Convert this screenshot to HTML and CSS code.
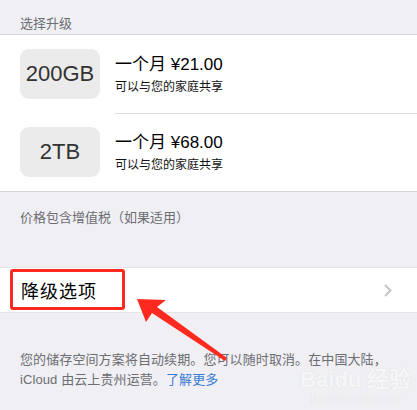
FILE: index.html
```html
<!DOCTYPE html>
<html lang="zh-CN">
<head>
<meta charset="utf-8">
<link rel="stylesheet" href="styles.css">
</head>
<body>
<div class="page">
  <div class="section-header">选择升级</div>
  <div class="plans">
    <div class="plan">
      <div class="badge">200GB</div>
      <div class="plan-info">
        <div class="price">一个月 ¥21.00</div>
        <div class="share">可以与您的家庭共享</div>
      </div>
    </div>
    <div class="plan">
      <div class="badge">2TB</div>
      <div class="plan-info">
        <div class="price">一个月 ¥68.00</div>
        <div class="share">可以与您的家庭共享</div>
      </div>
    </div>
  </div>
  <div class="tax-note">价格包含增值税（如果适用）</div>
  <div class="downgrade">
    <span class="downgrade-label">降级选项</span>
    <svg class="chevron" width="8" height="13" viewBox="0 0 8 13"><path d="M1 1 L6.5 6.5 L1 12" fill="none" stroke="#c4c4c9" stroke-width="2"/></svg>
    <div class="highlight"></div>
  </div>
  <div class="footer">
    <div class="footer-line">您的储存空间方案将自动续期。您可以随时取消。在中国大陆，</div>
    <div class="footer-line">iCloud 由云上贵州运营。<span class="link">了解更多</span></div>
  </div>
  <svg class="arrow" width="417" height="410" viewBox="0 0 417 410"><path d="M137 299 L166 300 L157 307 L227 358 L225 361 L152 313 L146 322 Z" fill="#ff2a1f"/></svg>
  <div class="watermark"><span class="wm-big">Bai<span class="wm-du">du</span> 经验</span><span class="wm-small">jingyan.baidu.com</span></div>
</div>
</body>
</html>
```
FILE: styles.css
```css
html, body {
  margin: 0;
  padding: 0;
}
body {
  background: #efeff4;
  font-family: "Noto Sans CJK SC", "Noto Sans", sans-serif;
  color: #000;
  width: 417px;
  height: 410px;
  overflow: hidden;
}
.page {
  position: relative;
  width: 417px;
  height: 410px;
}
.section-header {
  height: 35px;
  box-sizing: border-box;
  padding: 14px 0 0 20px;
  font-size: 13px;
  line-height: 18px;
  color: #6d6d72;
  border-bottom: 1px solid #d4d4d8;
}
.plans {
  background: #fff;
  border-bottom: 1px solid #d4d4d8;
}
.plan {
  display: flex;
  align-items: center;
  padding: 14px 0 14px 20px;
  position: relative;
}
.plan + .plan::before {
  content: "";
  position: absolute;
  left: 115px;
  right: 0;
  top: 0;
  height: 1px;
  background: #dcdce0;
}
.badge {
  width: 80px;
  height: 50px;
  border-radius: 9px;
  background: #ebebeb;
  display: flex;
  align-items: center;
  justify-content: center;
  font-family: "Liberation Sans", Arial, sans-serif;
  font-size: 22px;
  color: #333;
}
.plan-info {
  margin-left: 15px;
  display: flex;
  flex-direction: column;
  margin-top: -2px;
}
.price {
  font-family: "Liberation Sans", "Noto Sans CJK SC", sans-serif;
  font-size: 17px;
  line-height: 25px;
}
.share {
  font-size: 12px;
  line-height: 17px;
  color: #111;
}
.tax-note {
  height: 75px;
  box-sizing: border-box;
  padding: 16px 0 0 20px;
  font-size: 13px;
  line-height: 18px;
  color: #6d6d72;
}
.downgrade {
  position: relative;
  height: 44px;
  background: #fff;
  border-top: 1px solid #e4e4e8;
  border-bottom: 1px solid #e4e4e8;
  display: flex;
  align-items: center;
  justify-content: space-between;
  padding: 0 25px 0 21px;
}
.downgrade-label {
  font-size: 18px;
  letter-spacing: 1px;
}
.highlight {
  position: absolute;
  left: 10px;
  top: 1px;
  width: 115px;
  height: 41px;
  box-sizing: border-box;
  border: 3px solid #ff2a1f;
  border-radius: 3px;
}
.footer {
  padding: 37px 0 0 20px;
  font-family: "Liberation Sans", "Noto Sans CJK SC", sans-serif;
  font-size: 13px;
  line-height: 20px;
  color: #6d6d72;
  letter-spacing: 0.1px;
}
.footer-line {
  width: fit-content;
}
.link {
  color: #3a7bd5;
}
.arrow {
  position: absolute;
  left: 0;
  top: 0;
  pointer-events: none;
}
.watermark {
  position: absolute;
  left: 300px;
  top: 369px;
  display: flex;
  flex-direction: column;
  align-items: center;
  font-family: "Liberation Sans", Arial, sans-serif;
}
.wm-big {
  font-size: 22px;
  font-weight: bold;
  line-height: 22px;
  color: rgba(255,255,255,0.8);
  text-shadow: 0 0 1px rgba(205,205,210,0.8);
}
.wm-small {
  font-size: 11px;
  line-height: 14px;
  color: rgba(255,255,255,0.8);
  text-shadow: 0 0 1px rgba(205,205,210,0.8);
}
```
